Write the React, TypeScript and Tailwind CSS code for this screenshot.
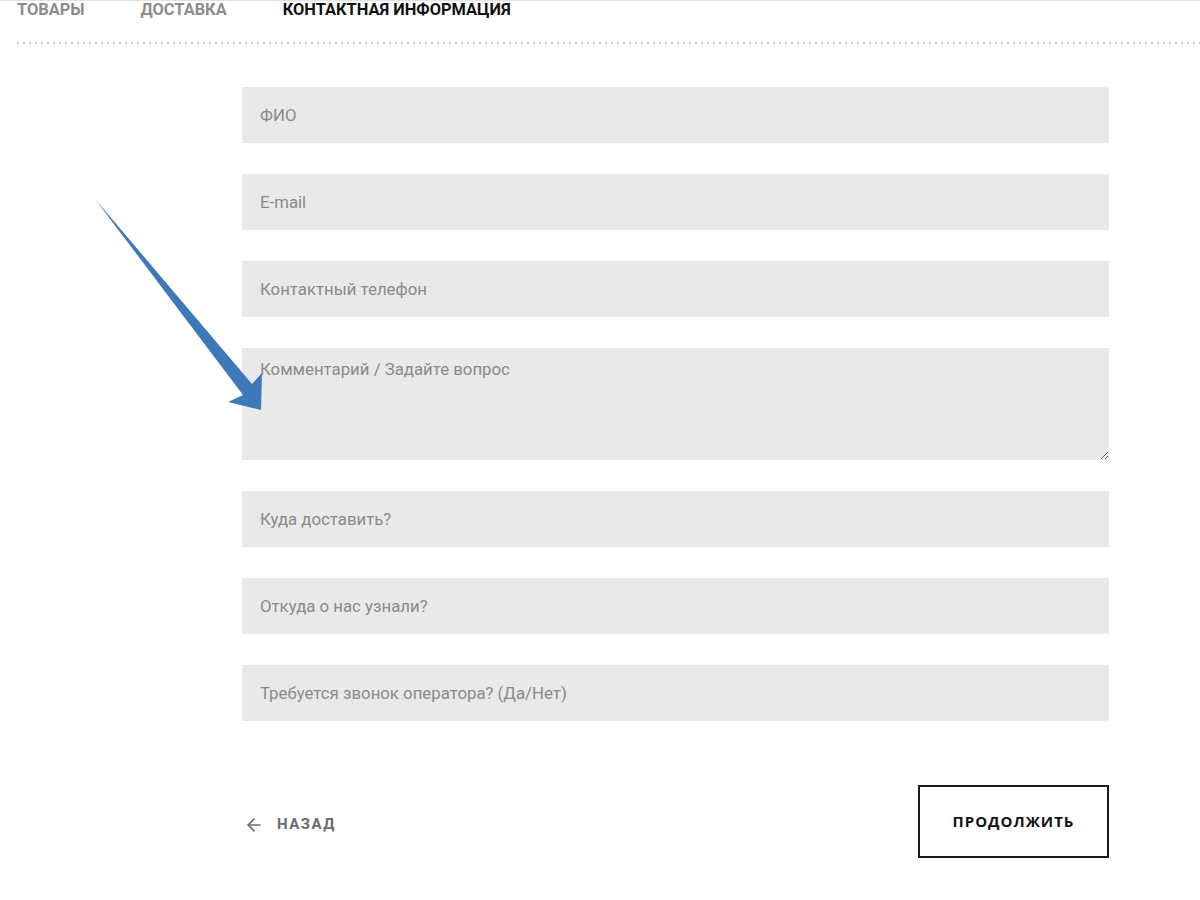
import { ArrowLeft } from "lucide-react";

const fields = [
  "ФИО",
  "E-mail",
  "Контактный телефон",
];

const fieldsAfter = [
  "Куда доставить?",
  "Откуда о нас узнали?",
  "Требуется звонок оператора? (Да/Нет)",
];

export default function App() {
  return (
    <div className="relative min-h-[900px] bg-white font-['Roboto',sans-serif] border-t border-[#e2e2e2]">
      {/* шаги оформления */}
      <div className="flex items-center gap-[56px] pl-[17px] h-[20px] -mt-px text-[16.4px] font-bold uppercase leading-none">
        <span className="text-[#8c8c8c]">Товары</span>
        <span className="text-[#8c8c8c]">Доставка</span>
        <span className="text-[#111]">Контактная информация</span>
      </div>
      <div className="ml-[17px] mt-[22px] h-[2px] bg-[linear-gradient(to_right,#cfcfcf_2px,transparent_2px)] bg-[length:6px_2px]" />

      <div className="ml-[242px] w-[867px] pt-[43px]">
        <div className="flex flex-col gap-[31px]">
          {fields.map((f) => (
            <input
              key={f}
              placeholder={f}
              className="h-[56px] w-full bg-[#e9e9e9] px-[18px] text-[16.8px] text-[#333] outline-none placeholder:text-[#8a8a8a]"
            />
          ))}
          <textarea
            placeholder="Комментарий / Задайте вопрос"
            className="h-[112px] w-full bg-[#e9e9e9] px-[18px] pt-[9px] text-[16.8px] text-[#333] outline-none placeholder:text-[#8a8a8a]"
          />
          {fieldsAfter.map((f) => (
            <input
              key={f}
              placeholder={f}
              className="h-[56px] w-full bg-[#e9e9e9] px-[18px] text-[16.8px] text-[#333] outline-none placeholder:text-[#8a8a8a]"
            />
          ))}
        </div>

        <div className="mt-[64px] flex items-center justify-between">
          <button className="flex items-center gap-[13px] pl-[2px] pt-[6px] text-[15px] font-bold uppercase tracking-[1.5px] text-[#6b6b6b]">
            <ArrowLeft className="h-[20px] w-[20px]" strokeWidth={2} />
            Назад
          </button>
          <button className="h-[73px] w-[191px] border-2 border-[#1a1a1a] font-['Open_Sans',sans-serif] text-[15px] font-bold uppercase tracking-[1px] text-[#111]">
            Продолжить
          </button>
        </div>
      </div>

      {/* стрелка-указатель */}
      <svg className="pointer-events-none absolute left-0 top-0" width="300" height="430" viewBox="0 0 300 430">
        <path d="M95 198 L252 383 L262 372 L261 409 L228 401 L243 394 Z" fill="#3d78b8" />
      </svg>
    </div>
  );
}
